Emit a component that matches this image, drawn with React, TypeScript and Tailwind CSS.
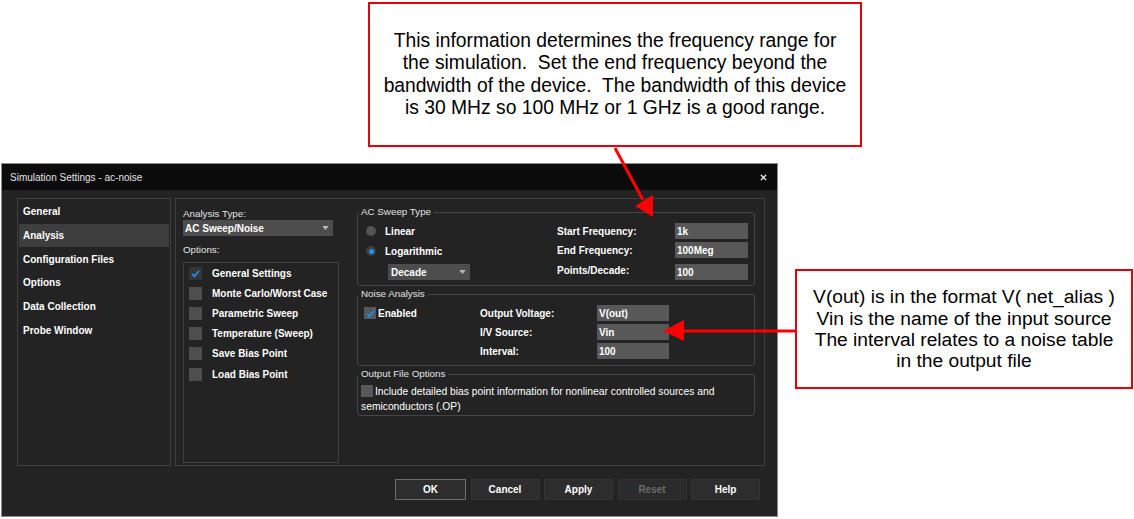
import React from 'react';

const navItems = ['General', 'Analysis', 'Configuration Files', 'Options', 'Data Collection', 'Probe Window'];
const optionItems = [
  'General Settings',
  'Monte Carlo/Worst Case',
  'Parametric Sweep',
  'Temperature (Sweep)',
  'Save Bias Point',
  'Load Bias Point',
];

const Check = () => (
  <svg viewBox="0 0 12 12" className="w-[11px] h-[11px]">
    <path d="M2.2 6.4 L4.9 9.1 L9.8 3" fill="none" stroke="#1d8fff" strokeWidth="1.9" />
  </svg>
);

const Caret = () => (
  <svg viewBox="0 0 8 5" className="w-[7px] h-[4px]">
    <path d="M0 0 H8 L4 5 Z" fill="#b9b9b9" />
  </svg>
);

const Radio = ({ on }: { on?: boolean }) =>
  on ? (
    <span className="w-[10px] h-[10px] rounded-full bg-[#3d3e3d] flex items-center justify-center">
      <span className="w-[5px] h-[5px] rounded-full bg-[#1c95ff]" />
    </span>
  ) : (
    <span className="w-[10px] h-[10px] rounded-full bg-[#525352]" />
  );

const Field = ({ value }: { value: string }) => (
  <div className="h-[16px] bg-[#575857] pl-[2px] flex items-center text-[10px] font-bold text-white">{value}</div>
);

export default function App() {
  return (
    <div className="relative w-[1134px] h-[519px] bg-white overflow-hidden font-['Liberation_Sans',Arial,sans-serif]">
      {/* dialog */}
      <div className="ml-[1px] mt-[163px] w-[777px] border border-[#8c8c8c] bg-[#222322] flex flex-col">
        <div className="h-[26px] bg-[#0b0b0b] flex items-center justify-between pl-[8px] pr-[10px]">
          <span className="text-[10px] text-[#e2e2e2]">Simulation Settings - ac-noise</span>
          <svg viewBox="0 0 8 8" className="w-[7px] h-[7px]">
            <path d="M1 1 L7 7 M7 1 L1 7" stroke="#f0f0f0" strokeWidth="1.6" />
          </svg>
        </div>

        <div className="flex pt-[8px] pl-[15px] pr-[12px] gap-[4px]">
          {/* nav */}
          <div className="w-[154px] h-[268px] border border-[#3e3f3e] pt-[1px] px-[1px]">
            {navItems.map((n) => (
              <div
                key={n}
                className={
                  n === 'Analysis'
                    ? 'h-[23.7px] flex items-center pl-[4px] bg-[#3d3e3d] text-[10px] font-bold text-white'
                    : 'h-[23.7px] flex items-center pl-[4px] text-[10px] font-bold text-white'
                }
              >
                {n}
              </div>
            ))}
          </div>

          {/* right panel */}
          <div className="flex-1 h-[268px] border border-[#3e3f3e] flex">
            <div className="w-[156px] ml-[7px] pt-[9px] flex flex-col">
              <div className="h-[12px] leading-[12px] text-[9.8px] text-[#e4e4e4]">Analysis Type:</div>
              <div className="h-[16px] w-[150px] bg-[#4c4d4c] flex items-center justify-between pl-[2px] pr-[4px] text-[10px] font-bold text-white">
                <span>AC Sweep/Noise</span>
                <Caret />
              </div>
              <div className="mt-[8px] h-[12px] leading-[12px] text-[9.8px] text-[#e4e4e4]">Options:</div>
              <div className="mt-[6px] h-[201px] border border-[#3e3f3e] pl-[5px]">
                {optionItems.map((o, i) => (
                  <div key={o} className="h-[20.2px] flex items-center gap-[10px]">
                    <span
                      className={
                        i === 0
                          ? 'w-[13px] h-[13px] bg-[#343534] flex items-center justify-center'
                          : 'w-[13px] h-[13px] bg-[#4d4e4d]'
                      }
                    >
                      {i === 0 && <Check />}
                    </span>
                    <span className="text-[10px] font-bold text-white">{o}</span>
                  </div>
                ))}
              </div>
            </div>

            <div className="w-[398px] ml-[18px] mt-[6px] flex flex-col">
              <fieldset className="border border-[#454645] rounded-[3px]">
                <legend className="px-[3px] leading-[14px] text-[9.8px] text-[#e4e4e4]">AC Sweep Type</legend>
                <div className="grid grid-cols-[191px_118px_73px] grid-rows-[16px_16px_16px] gap-y-[3px] pl-[8px] pt-[4px] pb-[8px] text-[10px] font-bold text-white">
                  <div className="flex items-center gap-[9px]">
                    <Radio />
                    <span>Linear</span>
                  </div>
                  <div className="flex items-center">Start Frequency:</div>
                  <Field value="1k" />
                  <div className="flex items-center gap-[9px] translate-y-[1px]">
                    <Radio on />
                    <span>Logarithmic</span>
                  </div>
                  <div className="flex items-center">End Frequency:</div>
                  <Field value="100Meg" />
                  <div className="ml-[22px] mt-[3px] w-[82px] h-[16px] bg-[#4c4d4c] flex items-center justify-between pl-[3px] pr-[4px]">
                    <span>Decade</span>
                    <Caret />
                  </div>
                  <div className="flex items-center mt-[3px]">Points/Decade:</div>
                  <div className="mt-[3px]">
                    <Field value="100" />
                  </div>
                </div>
              </fieldset>

              <fieldset className="mt-[1px] border border-[#454645] rounded-[3px]">
                <legend className="px-[3px] leading-[14px] text-[9.8px] text-[#e4e4e4]">Noise Analysis</legend>
                <div className="grid grid-cols-[116px_117px_72px] grid-rows-[16px_16px_16px] gap-y-[3px] pl-[6px] pt-[4px] pb-[6px] text-[10px] font-bold text-white">
                  <div className="flex items-center gap-[2px]">
                    <span className="w-[12px] h-[12px] bg-[#575857] flex items-center justify-center">
                      <Check />
                    </span>
                    <span>Enabled</span>
                  </div>
                  <div className="flex items-center">Output Voltage:</div>
                  <Field value="V(out)" />
                  <div />
                  <div className="flex items-center">I/V Source:</div>
                  <Field value="Vin" />
                  <div />
                  <div className="flex items-center">Interval:</div>
                  <Field value="100" />
                </div>
              </fieldset>

              <fieldset className="mt-[1px] border border-[#454645] rounded-[3px]">
                <legend className="px-[3px] leading-[14px] text-[9.8px] text-[#e4e4e4]">Output File Options</legend>
                <div className="pl-[3px] pr-[4px] pt-[3px] pb-[1px] text-[10.3px] leading-[15px] text-white">
                  <span className="inline-block align-[-2px] w-[12px] h-[12px] bg-[#575857] mr-[2px]" />
                  Include detailed bias point information for nonlinear controlled sources and semiconductors (.OP)
                </div>
              </fieldset>
            </div>
          </div>
        </div>

        <div className="flex justify-end gap-[4.5px] pt-[13px] pb-[16px] pr-[17px] text-[10px] font-bold">
          <button className="w-[71px] h-[21px] bg-[#2c2d2c] border border-[#6c6c6c] text-white">OK</button>
          <button className="w-[69px] h-[21px] bg-[#2c2d2c] border border-[#323332] text-white">Cancel</button>
          <button className="w-[69px] h-[21px] bg-[#2c2d2c] border border-[#323332] text-white">Apply</button>
          <button className="w-[69px] h-[21px] bg-[#2a2b2a] border border-[#303130] text-[#6b6b6b]">Reset</button>
          <button className="w-[69px] h-[21px] bg-[#2c2d2c] border border-[#323332] text-white">Help</button>
        </div>
      </div>

      {/* callout: frequency range */}
      <div className="absolute left-[368px] top-[2px] w-[494px] h-[145px] border-2 border-[#e0000e] bg-white flex flex-col items-center justify-center text-[19.3px] leading-[22.3px] text-black whitespace-pre">
        <div>This information determines the frequency range for</div>
        <div>the simulation.  Set the end frequency beyond the</div>
        <div>bandwidth of the device.  The bandwidth of this device</div>
        <div>is 30 MHz so 100 MHz or 1 GHz is a good range.</div>
      </div>

      {/* callout: noise fields */}
      <div className="absolute left-[795px] top-[269px] w-[338px] h-[120px] border-2 border-[#e0000e] bg-white flex flex-col items-center justify-center text-[19.2px] leading-[21.3px] text-black whitespace-pre">
        <div>V(out) is in the format V( net_alias )</div>
        <div>Vin is the name of the input source</div>
        <div>The interval relates to a noise table</div>
        <div>in the output file</div>
      </div>

      {/* arrows */}
      <svg className="absolute left-0 top-0 pointer-events-none" width="1134" height="519" viewBox="0 0 1134 519">
        <line x1="615" y1="148" x2="643" y2="200" stroke="#ff0000" strokeWidth="3" />
        <polygon points="653,217 635,206 653,195" fill="#ff0000" />
        <line x1="796" y1="331" x2="682" y2="331" stroke="#ff0000" strokeWidth="3" />
        <polygon points="663,331 684,320 684,341" fill="#ff0000" />
      </svg>
    </div>
  );
}
